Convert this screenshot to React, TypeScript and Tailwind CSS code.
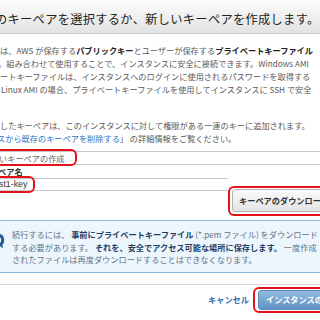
const RED_BOX = "absolute border-2 border-[#e3121b] rounded-[6px] pointer-events-none";

function InfoIcon() {
  return (
    <svg width="15" height="16" viewBox="0 0 15 16" className="shrink-0 ml-[-10px] mt-[5px]">
      <circle cx="7.5" cy="7" r="6.8" fill="#1d5a97" />
      <path d="M9 12 L13 15.5 L12 10 Z" fill="#1d5a97" />
      <circle cx="7.5" cy="7" r="3.6" fill="#ffffff" />
      <rect x="6.3" y="5" width="2.6" height="4.2" fill="#1d5a97" />
    </svg>
  );
}

export default function App() {
  return (
    <div className="w-[320px] h-[320px] overflow-hidden bg-white font-['Noto_Sans_CJK_JP','Noto_Sans',sans-serif] text-[8.2px] text-[#5a5a5a] whitespace-nowrap">
      {/* header */}
      <div className="h-[34px] pt-[6px] flex items-center bg-linear-to-b from-[#fdfdfd] to-[#e2e2e2] border-b border-[#c8c8c8]">
        <span className="ml-[-5px] text-[12.2px] tracking-[0.35px] text-[#222]">のキーペアを選択するか、新しいキーペアを作成します。</span>
      </div>

      {/* description */}
      <div className="mt-[9.5px] leading-[13px]">
        <div>
          は、AWS が保存する<b className="text-[#222]">パブリックキー</b>とユーザーが保存する<b className="text-[#222]">プライベートキーファイル</b>
        </div>
        <div className="ml-[-2px]">。組み合わせて使用することで、インスタンスに安全に接続できます。Windows AMI</div>
        <div>ートキーファイルは、インスタンスへのログインに使用されるパスワードを取得する</div>
        <div className="ml-[1px]">Linux AMI の場合、プライベートキーファイルを使用してインスタンスに SSH で安全</div>
      </div>

      <div className="mt-[23px] leading-[13px]">
        <div>したキーペアは、このインスタンスに対して権限がある一連のキーに追加されます。</div>
        <div className="ml-[-3px]">
          <span className="text-[#2f72c4]">スから既存のキーペアを削除する</span>」 の詳細情報をご覧ください。
        </div>
      </div>

      {/* key pair select */}
      <div className="relative mt-[6.5px] h-[14px] border-y border-[#c9c9c9] flex items-center">
        <span className="ml-[-1px] text-[#666]">いキーペアの作成</span>
        <div className={`${RED_BOX} left-[-5px] top-[-3px] w-[82px] h-[17px]`} />
      </div>

      <div className="h-[13px] leading-[13px] ml-[-2px] font-bold text-[#333]">ペア名</div>

      <div className="flex items-start">
        <div className="w-[228px] shrink-0">
          <div className="relative h-[13px] border-y border-[#c9c9c9] flex items-center">
            <span className="ml-[-1px] font-['Liberation_Sans',sans-serif] text-[8.8px] text-[#333]">st1-key</span>
            <div className={`${RED_BOX} left-[-5px] top-[-3px] w-[40px] h-[17px]`} />
          </div>
        </div>
        <div className="relative shrink-0 ml-[4px] mt-[11px]">
          <button className="h-[23px] w-[100px] pl-[6px] text-left rounded-[3px] border border-[#b4b4b4] bg-linear-to-b from-[#fafafa] to-[#e4e4e4] font-bold text-[#333] text-[8.2px]">
            キーペアのダウンロード
          </button>
          <div className={`${RED_BOX} left-[-4px] top-[-3px] w-[110px] h-[30px]`} />
        </div>
      </div>

      {/* info box */}
      <div className="mt-[8px] flex gap-[7px] pt-[7px] pb-[6px] bg-[#eef6fd] border-y border-[#8db7de] leading-[12.5px] text-[#61738a]">
        <InfoIcon />
        <div>
          <div>
            続行するには、 <b className="text-[#1f3d63]">事前にプライベートキーファイル</b> (*.pem ファイル) をダウンロード
          </div>
          <div>
            する必要があります。 <b className="text-[#1f3d63]">それを、安全でアクセス可能な場所に保存します。</b> 一度作成
          </div>
          <div>されたファイルは再度ダウンロードすることはできなくなります。</div>
        </div>
      </div>

      {/* footer */}
      <div className="mt-[11px] border-t border-[#d6d6d6]" />
      <div className="pt-[5px] pl-[208px] flex items-center">
        <span className="font-bold text-[#2e6db6]">キャンセル</span>
        <div className="relative ml-[9px] shrink-0">
          <button className="h-[20px] w-[90px] pl-[7px] text-left rounded-[3px] border border-[#5a8cbf] bg-linear-to-b from-[#93bbe0] to-[#5f92c4] font-bold text-white text-[8.2px]">
            インスタンスの作成
          </button>
          <div className={`${RED_BOX} left-[-5px] top-[-3px] w-[100px] h-[26px]`} />
        </div>
      </div>
    </div>
  );
}
